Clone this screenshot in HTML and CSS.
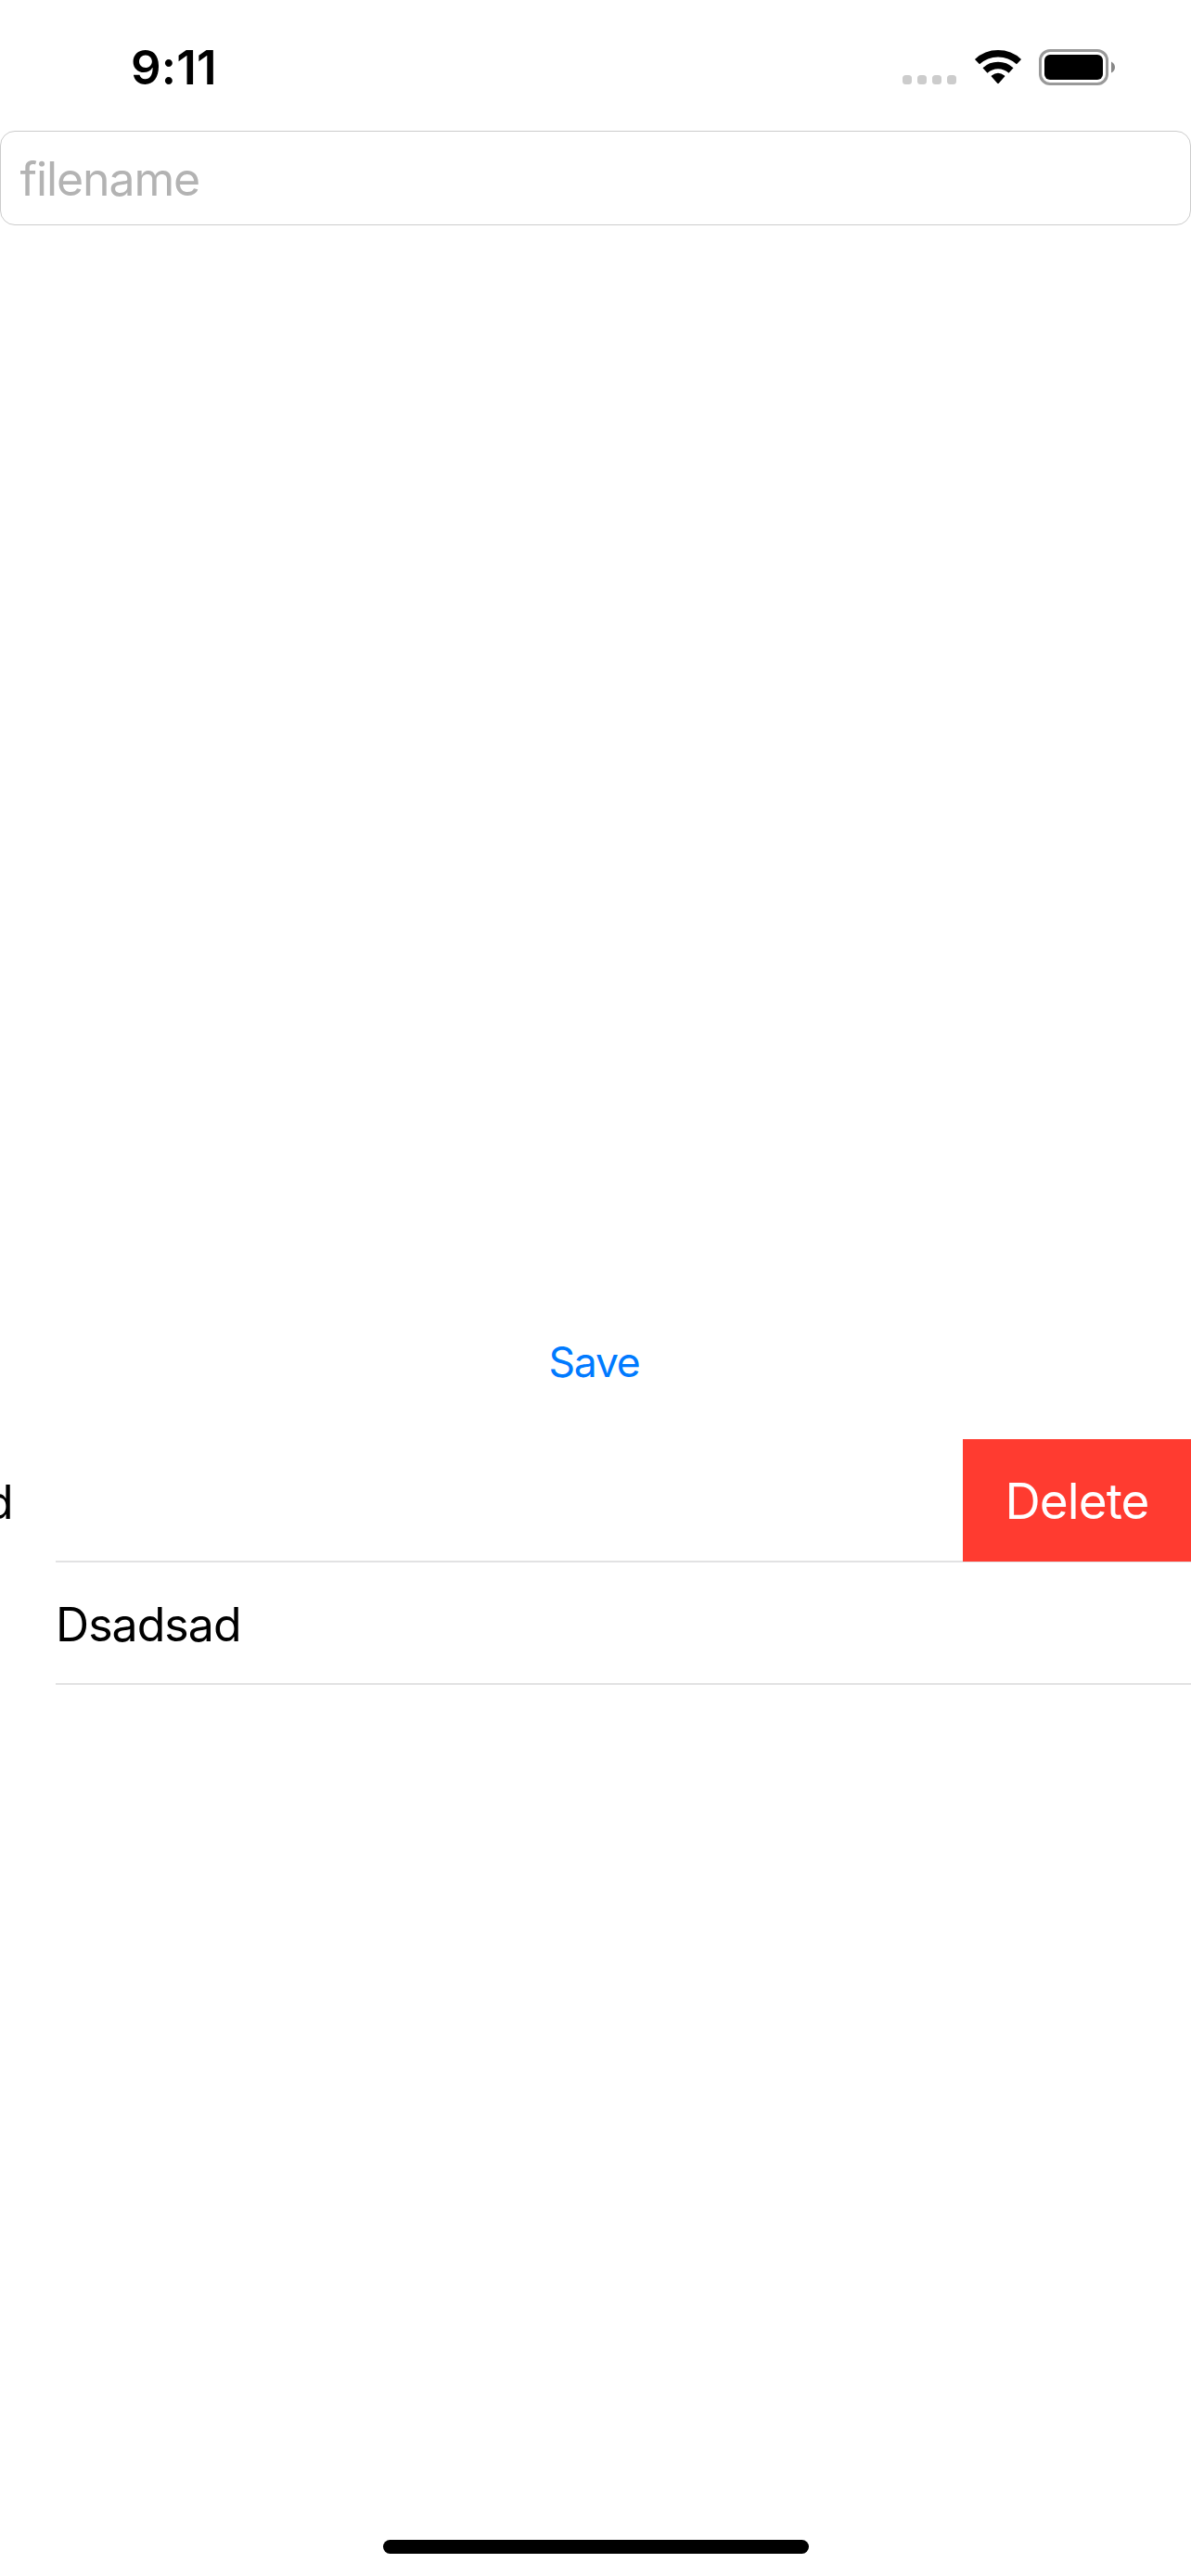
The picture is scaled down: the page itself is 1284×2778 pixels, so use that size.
FILE: index.html
```
<!DOCTYPE html>
<html lang="en">
<head>
<meta charset="utf-8">
<title>Files</title>
<link rel="stylesheet" href="styles.css">
</head>
<body>
<header class="status">
  <span class="time">9:11</span>
  <div class="indicators">
    <svg class="signal" width="58" height="10" viewBox="0 0 58 10"><rect width="10" height="10" rx="3.5"/><rect x="16" width="10" height="10" rx="3.5"/><rect x="32" width="10" height="10" rx="3.5"/><rect x="48" width="10" height="10" rx="3.5"/></svg>
    <svg class="wifi" width="52" height="38" viewBox="0 0 52 38">
      <path class="arc" d="M3.5 13.6A33 33 0 0 1 48.5 13.6"/>
      <path class="arc" d="M12 23A20.6 20.6 0 0 1 40 23"/>
      <path class="dot" d="M18.8 29.6Q18.4 29.1 19 28.6Q26 22.7 33 28.6Q33.6 29.1 33.2 29.6L26.8 36.8Q26 37.6 25.2 36.8Z"/>
    </svg>
    <svg class="battery" width="82" height="39" viewBox="0 0 82 39">
      <rect class="shell" x="1.5" y="1.5" width="72" height="36" rx="10.5"/>
      <rect class="charge" x="6" y="6" width="63" height="27" rx="6"/>
      <path class="cap" d="M78 13.5Q82 15.5 82 19.5T78 25.5Z"/>
    </svg>
  </div>
</header>
<main class="content">
  <input class="field" type="text" placeholder="filename" aria-label="filename">
  <div class="editor"></div>
  <button class="save">Save</button>
  <ul class="files">
    <li class="row swiped"><span class="name">Dsadsad</span><button class="delete">Delete</button></li>
    <li class="row"><span class="name">Dsadsad</span></li>
  </ul>
</main>
<footer class="home"></footer>
</body>
</html>
```
FILE: styles.css
```
* { box-sizing: border-box; }

body {
  display: flex;
  flex-direction: column;
  height: 2778px;
  margin: 0;
  overflow: hidden;
  background: #fff;
  color: #000;
  font: 400 50px/61px Inter, "Liberation Sans", sans-serif;
}

button {
  margin: 0;
  border: 0;
  padding: 0;
  background: none;
  font-family: inherit;
}

.status {
  display: flex;
  justify-content: space-between;
  height: 141px;
  padding: 42px 82px 0 141px;
}

.time {
  font-size: 51px;
  font-weight: 600;
  letter-spacing: 0.2px;
}

.indicators {
  display: flex;
  align-items: flex-start;
  padding-top: 11px;
}

.signal { margin: 28px 18.5px 0 0; fill: #ccc; }
.wifi { margin-right: 18.5px; }
.arc { fill: none; stroke: #000; stroke-width: 7.4; }
.shell { fill: none; stroke: #999; stroke-width: 3; }
.cap { fill: #888; }

.content {
  display: flex;
  flex: 1;
  flex-direction: column;
}

.field {
  width: 100%;
  height: 102px;
  border: 1px solid #ccc;
  border-radius: 16px;
  padding: 1px 20px 0 20.5px;
  background: #fff;
  font: inherit;
  letter-spacing: -1.1px;
}

.field::placeholder { color: #b3b3b3; opacity: 1; }

.editor { height: 1199px; }

.save {
  align-self: center;
  margin-right: 3px;
  color: #007aff;
  font-size: 44.5px;
  line-height: 55px;
  letter-spacing: -1.3px;
}

.files {
  margin: 55px 0 0;
  padding: 1px 0 0 60px;
  list-style: none;
}

.row {
  display: flex;
  justify-content: space-between;
  height: 132px;
  border-bottom: 2px solid #e2e2e3;
}

.name {
  padding-top: 37px;
  letter-spacing: -0.95px;
}

.swiped .name { margin-left: -246px; }

.delete {
  width: 246px;
  height: 132px;
  margin-top: -1px;
  padding-top: 2px;
  background: #ff3b30;
  color: #fff;
  font-size: 53px;
  line-height: 65px;
  letter-spacing: -0.9px;
}

.home {
  align-self: center;
  width: 459px;
  height: 15px;
  margin: 0 0 24px 1px;
  border-radius: 8px;
  background: #000;
}
```
